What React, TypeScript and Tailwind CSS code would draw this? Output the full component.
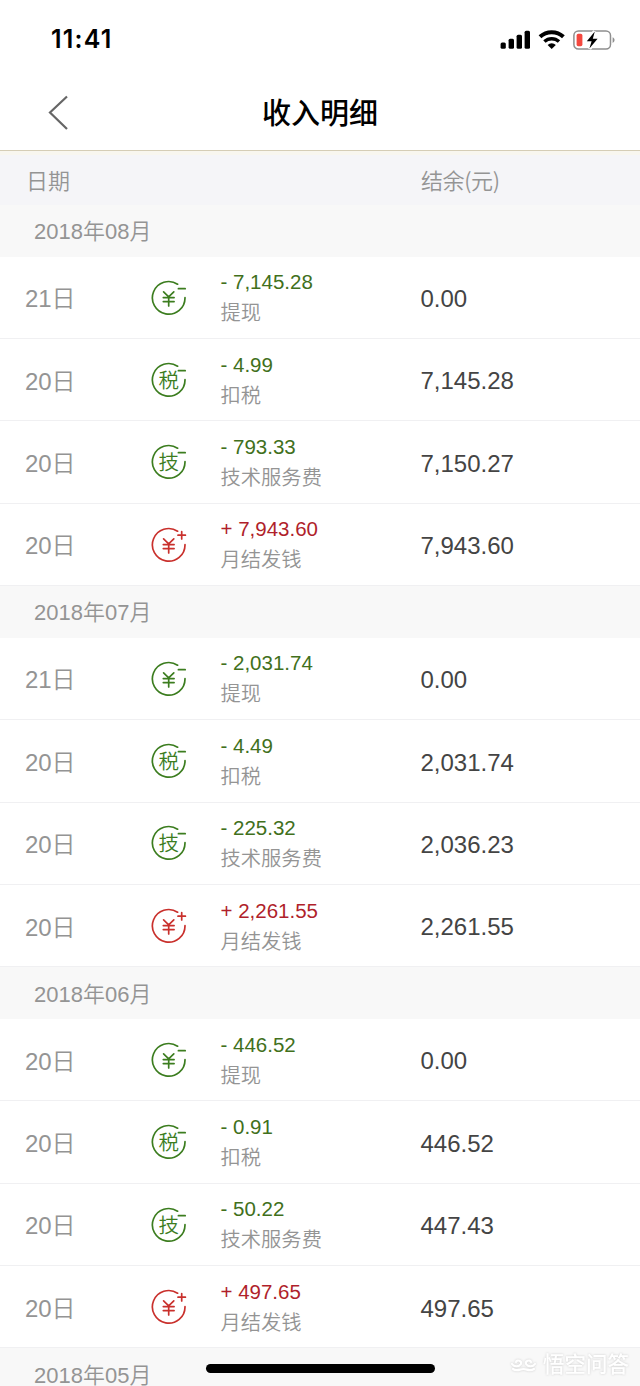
type Kind = 'withdraw' | 'tax' | 'tech' | 'income';

type Entry = {
  day: string;
  kind: Kind;
  amount: string;
  balance: string;
};

type Month = {
  title: string;
  entries: Entry[];
};

const labels: Record<Kind, string> = {
  withdraw: '提现',
  tax: '扣税',
  tech: '技术服务费',
  income: '月结发钱',
};

const months: Month[] = [
  {
    title: '2018年08月',
    entries: [
      { day: '21日', kind: 'withdraw', amount: '- 7,145.28', balance: '0.00' },
      { day: '20日', kind: 'tax', amount: '- 4.99', balance: '7,145.28' },
      { day: '20日', kind: 'tech', amount: '- 793.33', balance: '7,150.27' },
      { day: '20日', kind: 'income', amount: '+ 7,943.60', balance: '7,943.60' },
    ],
  },
  {
    title: '2018年07月',
    entries: [
      { day: '21日', kind: 'withdraw', amount: '- 2,031.74', balance: '0.00' },
      { day: '20日', kind: 'tax', amount: '- 4.49', balance: '2,031.74' },
      { day: '20日', kind: 'tech', amount: '- 225.32', balance: '2,036.23' },
      { day: '20日', kind: 'income', amount: '+ 2,261.55', balance: '2,261.55' },
    ],
  },
  {
    title: '2018年06月',
    entries: [
      { day: '20日', kind: 'withdraw', amount: '- 446.52', balance: '0.00' },
      { day: '20日', kind: 'tax', amount: '- 0.91', balance: '446.52' },
      { day: '20日', kind: 'tech', amount: '- 50.22', balance: '447.43' },
      { day: '20日', kind: 'income', amount: '+ 497.65', balance: '497.65' },
    ],
  },
  { title: '2018年05月', entries: [] },
];

function StatusBar() {
  return (
    <div className="flex h-[76px] items-center justify-between pt-[3px] pr-[25px] pl-[51px]">
      <span className="font-['Inter'] text-[25px] font-semibold tracking-[1.2px] text-black">11:41</span>
      <div className="flex items-center">
        <svg width="30" height="20" viewBox="0 0 30 20">
          <rect x="0.6" y="12.5" width="5.2" height="6.2" rx="1.5" />
          <rect x="8.6" y="8.8" width="5.4" height="9.9" rx="1.5" />
          <rect x="16.6" y="4.8" width="5.4" height="13.9" rx="1.5" />
          <rect x="24.6" y="0.7" width="5.4" height="18" rx="1.5" />
        </svg>
        <svg className="ml-2" width="27" height="20" viewBox="0 0 27 20" fill="none" stroke="#000">
          <path d="M2 6.8a17 17 0 0 1 23.4 0" strokeWidth="4" />
          <path d="M6.4 11.6a10.7 10.7 0 0 1 14.6 0" strokeWidth="3.4" />
          <path d="M13.7 19 9.6 14.9a6 6 0 0 1 8.2 0z" fill="#000" stroke="none" />
        </svg>
        <svg className="ml-2" width="42" height="22" viewBox="0 0 42 22">
          <rect x="0.9" y="2" width="36.6" height="18" rx="4.5" fill="none" stroke="#8f8f8f" strokeWidth="1.5" />
          <path d="M39.6 8.2c2.6 1.3 2.6 4.5 0 5.8z" fill="#8f8f8f" />
          <rect x="3.6" y="4.8" width="5.8" height="12.4" rx="1.6" fill="#f4483f" />
          <path d="M21.6 2.4 14 12.2h4.8L16.6 19.8 24.2 9.8h-4.8z" stroke="#fff" strokeWidth="3.5" fill="#fff" />
          <path d="M21.8 2.6 13.8 12.3h4.8L16.4 19.6 24.6 9.8h-4.8z" />
        </svg>
      </div>
    </div>
  );
}

function KindIcon({ kind }: { kind: Kind }) {
  const color = kind === 'income' ? '#c9302c' : '#3c7d1f';

  return (
    <svg width="38" height="38" viewBox="0 0 38 38" fill="none" stroke={color} strokeWidth="1.7" strokeLinecap="round">
      <path d="M26.6 4.2A16.3 16.3 0 1 0 34 17.7" />
      {kind === 'income' ? (
        <path d="M27 8.2h7.4M30.7 4.5v7.4" />
      ) : (
        <path d="M27.4 8.7h6.8" />
      )}
      {kind === 'tax' || kind === 'tech' ? (
        <text
          x="17.8"
          y="26"
          textAnchor="middle"
          fill={color}
          stroke="none"
          className="font-['Noto_Sans_CJK_SC',sans-serif] text-[20.5px]"
        >
          {kind === 'tax' ? '税' : '技'}
        </text>
      ) : (
        <path d="M12.6 11.8l5.1 5 5.1-5M12.3 17.6h10.8M12.3 21.6h10.8M17.7 17v9" />
      )}
    </svg>
  );
}

function EntryRow({ entry }: { entry: Entry }) {
  return (
    <div className="flex h-[82.4px] items-center border-b border-[#f0f0f2] pl-[25px]">
      <span className="w-[126px] pt-1 text-[24px] tracking-[-0.1px] text-[#949494]">{entry.day}</span>
      <div className="w-[69.5px] pt-[2.5px]">
        <KindIcon kind={entry.kind} />
      </div>
      <div className="w-[200px] pt-[1px] text-[20.5px] leading-[31px]">
        <p className={entry.kind === 'income' ? 'text-[#b01f2b]' : 'text-[#41701c]'}>{entry.amount}</p>
        <p className="pt-px text-[20.3px] leading-[31px] text-[#949494]">{labels[entry.kind]}</p>
      </div>
      <span className="pt-[3.5px] text-[24px] text-[#444]">{entry.balance}</span>
    </div>
  );
}

function Watermark() {
  return (
    <div className="absolute right-[11px] bottom-[7px] flex items-center gap-1.5 text-white [filter:drop-shadow(0_0_1px_#ccc)]">
      <svg width="27" height="20" viewBox="0 0 27 20" fill="none" stroke="currentColor" strokeWidth="2.2" strokeLinecap="round">
        <path d="M2 9c2 3 7 3 9 0 1-3-4-5-5-2M25 9c-2 3-7 3-9 0-1-3 4-5 5-2M3 14c4 3 7 0 10.5 0s6 3 10.5 0" />
      </svg>
      <span className="text-[21.5px] leading-[28px] font-medium">悟空问答</span>
    </div>
  );
}

export default function App() {
  return (
    <div className="relative h-[1386px] w-[640px] overflow-hidden bg-white font-['Liberation_Sans','Noto_Sans_CJK_SC',sans-serif] font-[350]">
      <StatusBar />
      <header className="grid h-[75px] grid-cols-[1fr_auto_1fr] items-center border-b border-[#d5cdb6] pl-12">
        <svg width="22" height="36" viewBox="0 0 22 36" fill="none" stroke="#666" strokeWidth="2.2">
          <path d="M19 1.5 2 17.5 19 34" />
        </svg>
        <h1 className="-ml-12 pt-[3px] text-[29px] font-medium text-black">收入明细</h1>
      </header>
      <div className="flex h-[54px] items-center border-t-4 border-[#f8f6ef] bg-[#f5f5f8] pb-[2px] pl-[26px] font-['Noto_Sans_CJK_SC',sans-serif] text-[22px] text-[#949494]">
        <span className="w-[395px]">日期</span>
        <span className="tracking-[-0.4px]">结余(元)</span>
      </div>
      {months.map((month) => (
        <section key={month.title}>
          <h2 className="flex h-[51.6px] items-center bg-[#f8f8f8] pt-[2px] pl-[34px] text-[22px] font-[350] text-[#949494]">
            {month.title}
          </h2>
          {month.entries.map((entry, index) => (
            <EntryRow key={index} entry={entry} />
          ))}
        </section>
      ))}
      <div className="absolute bottom-[13.5px] left-[206px] h-[9px] w-[229px] rounded-full bg-black" />
      <Watermark />
    </div>
  );
}
